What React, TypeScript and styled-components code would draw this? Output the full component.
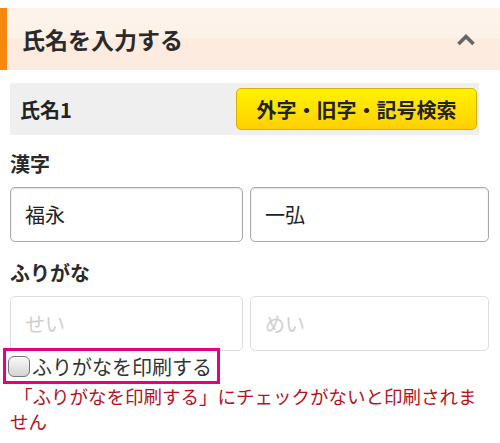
import styled, { createGlobalStyle } from 'styled-components';

const GlobalStyle = createGlobalStyle`
  body {
    margin: 8px 0 0;
    background: #fff;
    font-family: "Noto Sans CJK JP", "Noto Sans", sans-serif;
    color: #222;
  }
`;

const App = () => {
  return (
    <>
      <GlobalStyle />
      <SectionHeader>
        <Title>氏名を入力する</Title>
        <svg width="18" height="13" viewBox="0 0 18 13">
          <polyline points="1.5,11 9,3.5 16.5,11" fill="none" stroke="#666" strokeWidth="3.6" />
        </svg>
      </SectionHeader>
      <Main>
        <NameBar>
          <NameTitle>氏名1</NameTitle>
          <SearchButton type="button">外字・旧字・記号検索</SearchButton>
        </NameBar>

        <FieldLabel>漢字</FieldLabel>
        <InputRow>
          <TextInput defaultValue="福永" />
          <TextInput defaultValue="一弘" />
        </InputRow>

        <FieldLabel $gap={17}>ふりがな</FieldLabel>
        <InputRow>
          <TextInput $soft placeholder="せい" />
          <TextInput $soft placeholder="めい" />
        </InputRow>

        <CheckLabel>
          <CheckBox type="checkbox" />
          ふりがなを印刷する
        </CheckLabel>
        <Note>
          「ふりがなを印刷する」にチェックがないと印刷されま
          <br />
          せん
        </Note>
      </Main>
    </>
  );
};

export default App;

const SectionHeader = styled.header`
  height: 62px;
  display: flex;
  align-items: center;
  justify-content: space-between;
  border-left: 7px solid #f7870f;
  padding: 0 25px 0 15px;
  background: linear-gradient(#fdf3ea 0%, #fdf2e8 48%, #fcebdd 50%, #fcece0 100%);
`;

const Title = styled.h2`
  margin: 0;
  font-size: 23px;
  font-weight: bold;
  color: #2a2a2a;
`;

const Main = styled.main`
  padding: 13px 11px 0 10px;
`;

const NameBar = styled.div`
  height: 52px;
  margin-right: 10px;
  display: flex;
  align-items: center;
  justify-content: space-between;
  padding: 0 2px 0 10px;
  background: #efefef;
`;

const NameTitle = styled.span`
  font-size: 20px;
  font-weight: bold;
`;

const SearchButton = styled.button`
  width: 241px;
  height: 42px;
  border: 1px solid #d8b200;
  border-radius: 5px;
  background: linear-gradient(#fff200, #ffe000 55%, #ffcf00);
  font-family: inherit;
  font-size: 20px;
  font-weight: bold;
  color: #222;
  cursor: pointer;
`;

const FieldLabel = styled.div<{ $gap?: number }>`
  margin-top: ${({ $gap }) => $gap ?? 15}px;
  margin-bottom: 9px;
  font-size: 20px;
  font-weight: bold;
  line-height: 28px;
  color: #2a2a2a;
`;

const InputRow = styled.div`
  display: grid;
  grid-template-columns: 233px 239px;
  gap: 7px;
`;

const TextInput = styled.input<{ $soft?: boolean }>`
  box-sizing: border-box;
  height: 55px;
  width: 100%;
  padding: 0 14px;
  border: 1px solid ${({ $soft }) => ($soft ? '#dedede' : '#a9a9a9')};
  border-radius: 5px;
  box-shadow: ${({ $soft }) => ($soft ? 'none' : 'inset 0 1px 2px rgba(0,0,0,0.12)')};
  font-family: inherit;
  font-size: 20px;
  color: #222;
  outline: none;
  &::placeholder {
    color: #cfcfcf;
  }
`;

const CheckLabel = styled.label`
  display: flex;
  align-items: center;
  width: 209px;
  height: 30px;
  margin: 0 0 0 -4px;
  padding-left: 2px;
  outline: 3px solid #e4007f;
  font-size: 20px;
  color: #333;
`;

const CheckBox = styled.input`
  appearance: none;
  box-sizing: border-box;
  width: 22px;
  height: 21px;
  margin: 0 2px 0 0;
  border: 1px solid #777;
  border-radius: 6px;
  background: linear-gradient(#fafafa, #d4d4d4);
`;

const Note = styled.p`
  margin: 3px 0 0;
  text-indent: 4px;
  white-space: nowrap;
  font-size: 18.5px;
  line-height: 25px;
  color: #b5121b;
`;
